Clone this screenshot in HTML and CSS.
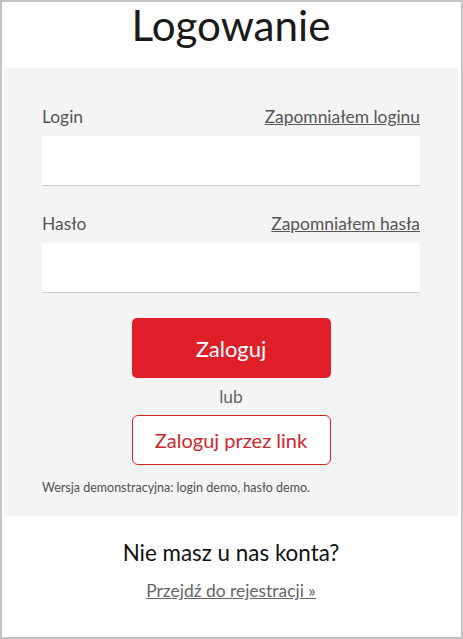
FILE: index.html
```html
<!DOCTYPE html>
<html lang="pl">
<head>
<meta charset="utf-8">
<link rel="stylesheet" href="styles.css">
</head>
<body>
<div class="frame">
  <h1 class="title">Logowanie</h1>
  <div class="panel">
    <div class="field">
      <div class="field-head">
        <label class="label">Login</label>
        <a class="forgot" href="#">Zapomniałem loginu</a>
      </div>
      <div class="input"></div>
    </div>
    <div class="field">
      <div class="field-head">
        <label class="label">Hasło</label>
        <a class="forgot" href="#">Zapomniałem hasła</a>
      </div>
      <div class="input"></div>
    </div>
    <div class="actions">
      <button class="btn-primary">Zaloguj</button>
      <div class="or">lub</div>
      <button class="btn-outline">Zaloguj przez link</button>
    </div>
    <p class="demo">Wersja demonstracyjna: login demo, hasło demo.</p>
  </div>
  <div class="register">
    <p class="register-q">Nie masz u nas konta?</p>
    <a class="register-link" href="#">Przejdź do rejestracji »</a>
  </div>
</div>
</body>
</html>
```
FILE: styles.css
```css
* { box-sizing: border-box; }
html, body { margin: 0; padding: 0; }
body {
  font-family: Lato, "Open Sans", sans-serif;
  background: #fff;
}
.frame {
  width: 463px;
  height: 639px;
  border: 2px solid #c3c3c3;
  padding: 0 3px 0 2px;
  background: #fff;
}
.title {
  margin: 0;
  height: 66px;
  text-align: center;
  font-weight: 400;
  font-size: 42.2px;
  line-height: 46px;
  color: #1a1a1a;
}
.panel {
  display: flex;
  flex-direction: column;
  background: #f4f4f4;
  padding: 38px 38px 0 38px;
  height: 448px;
}
.field + .field { margin-top: 27px; }
.field-head {
  display: flex;
  justify-content: space-between;
  align-items: baseline;
  height: 30px;
  padding-top: 1px;
  font-size: 17.4px;
  line-height: 20px;
}
.label { color: #555; }
.forgot { color: #555; text-decoration: underline; }
.input {
  height: 50px;
  background: #fff;
  border-bottom: 1px solid #cfcfcf;
}
.actions {
  display: flex;
  flex-direction: column;
  align-items: center;
  margin-top: 25px;
}
.btn-primary {
  width: 199px;
  height: 60px;
  border: none;
  border-radius: 5px;
  background: #e01f28;
  color: #fff;
  font-family: Lato, sans-serif;
  font-size: 22px;
  padding: 0;
}
.or {
  color: #666;
  font-size: 17.4px;
  line-height: 20px;
  margin: 9px 0 8px;
}
.btn-outline {
  width: 199px;
  height: 50px;
  border: 1px solid #d0242c;
  border-radius: 6px;
  background: #fff;
  color: #d0242c;
  font-family: Lato, sans-serif;
  font-size: 20px;
  padding: 0;
}
.demo {
  margin: 15px 0 0;
  font-size: 12.5px;
  line-height: 16px;
  color: #505050;
}
.register {
  text-align: center;
  padding-top: 23px;
}
.register-q {
  margin: 0;
  font-size: 22.4px;
  line-height: 28px;
  color: #111;
}
.register-link {
  display: inline-block;
  margin-top: 13px;
  font-size: 17.4px;
  color: #666;
  text-decoration: underline;
}
```
